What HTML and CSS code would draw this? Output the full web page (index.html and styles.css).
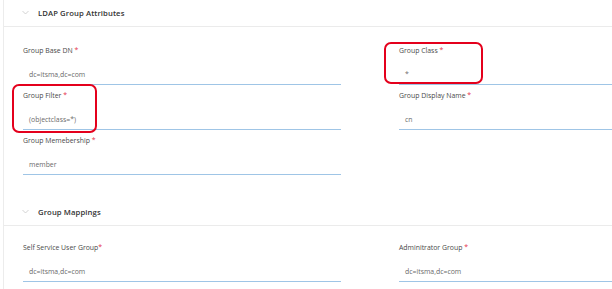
FILE: index.html
```html
<!DOCTYPE html>
<html lang="en">
<head>
  <meta charset="UTF-8">
  <title>LDAP Group Settings</title>
  <link rel="stylesheet" href="styles.css">
</head>
<body>
  <div class="panel">
    <!-- LDAP group attributes -->
    <div class="section">
      <div class="section-head">
        <svg class="chevron" width="7" height="5" viewBox="0 0 7 5"><polyline points="0.5,1 3.5,4 6.5,1" fill="none" stroke="#c8c8c8" stroke-width="0.8"/></svg>
        <span class="section-title">LDAP Group Attributes</span>
      </div>
      <div class="fields">
        <div class="field">
          <div class="field-label">Group Base DN <span class="req">*</span></div>
          <div class="field-input">dc=itsma,dc=com</div>
        </div>
        <div class="field">
          <div class="field-label">Group Class <span class="req">*</span></div>
          <div class="field-input">*</div>
          <div class="mark mark-class"></div>
        </div>
        <div class="field">
          <div class="field-label">Group Filter <span class="req">*</span></div>
          <div class="field-input">(objectclass=*)</div>
          <div class="mark mark-filter"></div>
        </div>
        <div class="field">
          <div class="field-label">Group Display Name <span class="req">*</span></div>
          <div class="field-input">cn</div>
        </div>
        <div class="field">
          <div class="field-label">Group Memebership <span class="req">*</span></div>
          <div class="field-input">member</div>
        </div>
      </div>
    </div>
    <!-- Group mappings -->
    <div class="section">
      <div class="section-head">
        <svg class="chevron" width="7" height="5" viewBox="0 0 7 5"><polyline points="0.5,1 3.5,4 6.5,1" fill="none" stroke="#c8c8c8" stroke-width="0.8"/></svg>
        <span class="section-title">Group Mappings</span>
      </div>
      <div class="fields fields-tight">
        <div class="field">
          <div class="field-label">Self Service User Group<span class="req">*</span></div>
          <div class="field-input">dc=itsma,dc=com</div>
        </div>
        <div class="field">
          <div class="field-label">Adminitrator Group <span class="req">*</span></div>
          <div class="field-input">dc=itsma,dc=com</div>
        </div>
      </div>
    </div>
  </div>
</body>
</html>
```

FILE: styles.css
```css
html, body {
  margin: 0;
  padding: 0;
  background: #fff;
  font-family: 'Open Sans', 'Noto Sans', Arial, sans-serif;
  width: 612px;
  height: 289px;
  overflow: hidden;
}
.panel {
  margin-left: 3px;
  border-left: 1px solid #ececec;
  width: 608px;
  height: 289px;
  overflow: hidden;
}
.section-head {
  height: 27px;
  box-sizing: border-box;
  border-bottom: 1px solid #ebebeb;
  display: flex;
  align-items: center;
  padding-left: 18px;
  padding-bottom: 1px;
}
.chevron {
  display: block;
  margin-right: 9px;
}
.section-title {
  font-size: 7.7px;
  font-weight: 600;
  color: #333;
  letter-spacing: 0.1px;
}
.fields {
  display: grid;
  grid-template-columns: 318px 318px;
  column-gap: 58px;
  row-gap: 6px;
  padding: 19px 0 24px 19px;
}
.fields-tight {
  padding-top: 17px;
}
.field {
  position: relative;
}
.field-label {
  height: 10px;
  line-height: 10px;
  font-size: 6.9px;
  color: #4a4a4a;
}
.req {
  color: #e5304a;
}
.field-input {
  height: 29px;
  box-sizing: border-box;
  border-bottom: 1px solid #9fc5e6;
  padding: 0 0 5px 6px;
  display: flex;
  align-items: flex-end;
  font-size: 6.9px;
  color: #6a6a6a;
}
.mark {
  position: absolute;
  border: 2px solid #e4001c;
  border-radius: 7px;
  box-sizing: border-box;
}
.mark-class {
  left: -15px;
  top: -4px;
  width: 99px;
  height: 42px;
}
.mark-filter {
  left: -11px;
  top: -7px;
  width: 85px;
  height: 49px;
}
```
